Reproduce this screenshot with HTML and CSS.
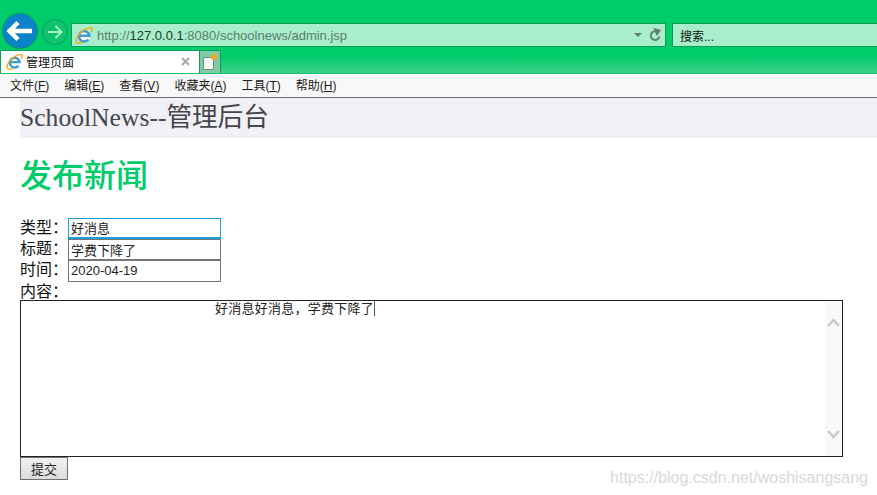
FILE: index.html
```html
<!DOCTYPE html>
<html lang="zh">
<head>
<meta charset="utf-8">
<title>管理页面</title>
<link rel="stylesheet" href="styles.css">
</head>
<body>
<svg class="defs" width="0" height="0" aria-hidden="true">
  <defs>
    <symbol id="ie" viewBox="0 0 20 20">
      <circle cx="10.500" cy="10.500" r="6.500" fill="#fff"/>
      <path d="M4.800 10.800H16A5.800 5.800 0 1 0 14.800 15" fill="none" stroke="#3a9bd8" stroke-width="2.800"/>
      <path d="M2 18.500C-.5 15 5 6.500 11.500 3.500c3-1.400 6.500-2.500 7.500-1 .5 1-.5 3-1.500 4.500M2 18.500c1.500 1.500 4 .5 6.500-1" fill="none" stroke="#f2ac12" stroke-width="1.600"/>
    </symbol>
  </defs>
</svg>

<header class="chrome">
  <div class="toolbar">
    <button class="back" type="button" aria-label="后退">
      <svg width="30" height="24" viewBox="0 0 30 24"><path d="M13 3.500L4.500 12l8.500 8.500M6 12h21" fill="none" stroke="#fff" stroke-width="4.500"/></svg>
    </button>
    <button class="forward" type="button" aria-label="前进">
      <svg width="16" height="14" viewBox="0 0 16 14"><path d="M8.500 1l6 6-6 6M14 7H1" fill="none" stroke="#a9eecb" stroke-width="2"/></svg>
    </button>
    <div class="address">
      <svg class="favicon" width="18" height="18"><use href="#ie"/></svg>
      <span class="url">http://<b>127.0.0.1</b>:8080/schoolnews/admin.jsp</span>
      <svg class="drop" width="8" height="4" viewBox="0 0 8 4"><path d="M0 0h8L4 4z" fill="#5f7f70"/></svg>
      <svg class="refresh" width="12" height="14" viewBox="0 0 12 14"><path d="M9.800 5.500A4.300 4.300 0 1 0 10.300 8.500M6 1.500l4.500 1L8 6z" fill="none" stroke="#5f7f70" stroke-width="2"/></svg>
    </div>
    <div class="search">搜索...</div>
  </div>
  <div class="tabs">
    <div class="tab">
      <svg class="favicon" width="17" height="17"><use href="#ie"/></svg>
      <span class="tab-title">管理页面</span>
      <svg class="close" width="9" height="9" viewBox="0 0 9 9"><path d="M1 1l7 7M8 1L1 8" stroke="#a8a8a8" stroke-width="2"/></svg>
    </div>
    <div class="newtab">
      <svg width="18" height="18" viewBox="0 0 18 18">
        <path d="M2.500 4.500h10v12h-10z" fill="#f7f7f7" stroke="#6f8f7f"/>
        <path d="M13 .5v7M9.500 4h7M10.500 1.500l5 5M15.500 1.500l-5 5" stroke="#f2a623" stroke-width="1.300"/>
      </svg>
    </div>
  </div>
  <nav class="menu">
    <span>文件(<u>F</u>)</span>
    <span>编辑(<u>E</u>)</span>
    <span>查看(<u>V</u>)</span>
    <span>收藏夹(<u>A</u>)</span>
    <span>工具(<u>T</u>)</span>
    <span>帮助(<u>H</u>)</span>
  </nav>
</header>

<main class="page">
  <div class="brand">SchoolNews--管理后台</div>
  <h1 class="title">发布新闻</h1>
  <form class="form">
    <div class="row"><label for="t">类型：</label><input id="t" class="field active" value="好消息"></div>
    <div class="row"><label for="h">标题：</label><input id="h" class="field" value="学费下降了"></div>
    <div class="row row-tall"><label for="d">时间：</label><input id="d" class="field" value="2020-04-19"></div>
    <div class="row content-label">内容：</div>
    <div class="editor">
      <div class="editor-body"><span class="editor-text">好消息好消息，学费下降了</span><span class="caret"></span></div>
      <div class="scroll">
        <svg width="13" height="9" viewBox="0 0 13 9"><path d="M1 8l5.500-6 5.500 6" fill="none" stroke="#c8c8c8" stroke-width="2.400"/></svg>
        <svg width="13" height="9" viewBox="0 0 13 9"><path d="M1 1l5.500 6 5.500-6" fill="none" stroke="#c8c8c8" stroke-width="2.400"/></svg>
      </div>
    </div>
    <button class="submit" type="button">提交</button>
  </form>
</main>
<div class="watermark">https://blog.csdn.net/woshisangsang</div>
</body>
</html>
```

FILE: styles.css
```css
html, body { margin: 0; padding: 0; height: 100%; overflow: hidden; background: #fff; }
body { font-family: "Liberation Sans", "Noto Sans CJK SC", sans-serif; position: relative; }
.defs { position: absolute; }
button { padding: 0; font: inherit; }

.chrome { display: flex; flex-direction: column; }
.toolbar { height: 50px; background: #00cc6a; display: flex; align-items: flex-end; box-sizing: border-box; padding: 0 0 3px 2px; }
.back { width: 36px; height: 36px; border-radius: 50%; background: #0a84c6; border: 1px solid #079a66; display: flex; align-items: center; justify-content: center; margin-bottom: -2px; flex: none; }
.forward { width: 26px; height: 26px; border-radius: 50%; background: #0fc26c; border: 1px solid #0b9c5c; display: flex; align-items: center; justify-content: center; margin: 0 3px 2px 4px; flex: none; }
.address, .search { height: 24px; box-sizing: border-box; background: #a9eecb; border: 1px solid #0b9c5c; display: flex; align-items: center; }
.address { width: 595px; padding: 0 4px 0 3px; }
.url { font-size: 13px; color: #5b7d6e; margin-left: 4px; flex: 1; white-space: nowrap; }
.url b { font-weight: normal; color: #173d2c; }
.drop { margin-right: 7px; }
.search { flex: 1; margin-left: 6px; margin-right: -2px; padding-left: 7px; font-size: 12px; color: #111; }

.tabs { height: 24px; box-sizing: border-box; background: linear-gradient(#00cc6a 0, #00cc6a 6px, #3ccf88 100%); border-bottom: 1px solid #14c271; display: flex; align-items: flex-end; }
.tab { width: 199px; height: 23px; box-sizing: border-box; background: #fff; border-top: 1px solid #0b9c5c; border-left: 1px solid #0b9c5c; display: flex; align-items: center; padding: 0 9px 2px 5px; }
.tab-title { font-size: 12px; color: #111; margin-left: 3px; flex: 1; }
.newtab { width: 22px; height: 23px; box-sizing: border-box; background: #7fcba3; border: 1px solid #0b9c5c; border-bottom: 0; display: flex; align-items: center; justify-content: center; }

.menu { height: 24px; box-sizing: border-box; background: #f8f8f8; border-bottom: 1px solid #6d6d6d; display: flex; align-items: center; gap: 15px; padding: 0 0 2px 10px; font-size: 12px; color: #1a1a1a; }

.page { padding-left: 20px; }
.brand { height: 40px; background: #f0f0f5; font-family: "Liberation Serif", "Noto Sans CJK SC", serif; font-size: 25.6px; line-height: 39px; color: #45454c; }
.title { margin: 19px 0 22px; font-family: "Liberation Serif", "Noto Sans CJK SC", serif; font-size: 32px; line-height: 39px; font-weight: 500; color: #00cc6a; }

.row { display: flex; align-items: flex-start; height: 21px; font-size: 16px; line-height: 20px; color: #111; }
.row-tall { height: 22px; }
.row label { width: 48px; }
.field { width: 153px; height: 21px; box-sizing: border-box; border: 1px solid #767676; padding: 0 2px 1px; margin: 0; font-family: inherit; font-size: 13px; color: #222; background: #fff; outline: 0; border-radius: 0; }
.row-tall .field { height: 22px; }
.field.active { border-color: #1a9fdc; border-bottom-width: 2px; }
.content-label { height: 18px; }

.editor { width: 823px; height: 157px; box-sizing: border-box; border: 1px solid #222; display: flex; }
.editor-body { flex: 1; padding: 0 0 0 194px; font-size: 13px; line-height: 16px; color: #222; letter-spacing: .25px; }
.caret { display: inline-block; width: 1px; height: 15px; background: #555; vertical-align: -3px; }
.scroll { width: 17px; background: #f9f9f9; display: flex; flex-direction: column; justify-content: space-between; align-items: center; padding: 17px 0 17px; box-sizing: border-box; }

.submit { display: block; width: 48px; height: 23px; box-sizing: border-box; border: 1px solid #707070; border-radius: 0; background: linear-gradient(#f2f2f2, #dcdcdc); font-size: 13px; color: #222; }

.watermark { position: absolute; right: 9px; top: 469px; font-size: 16px; line-height: 18px; color: #d8d8d8; }
```
